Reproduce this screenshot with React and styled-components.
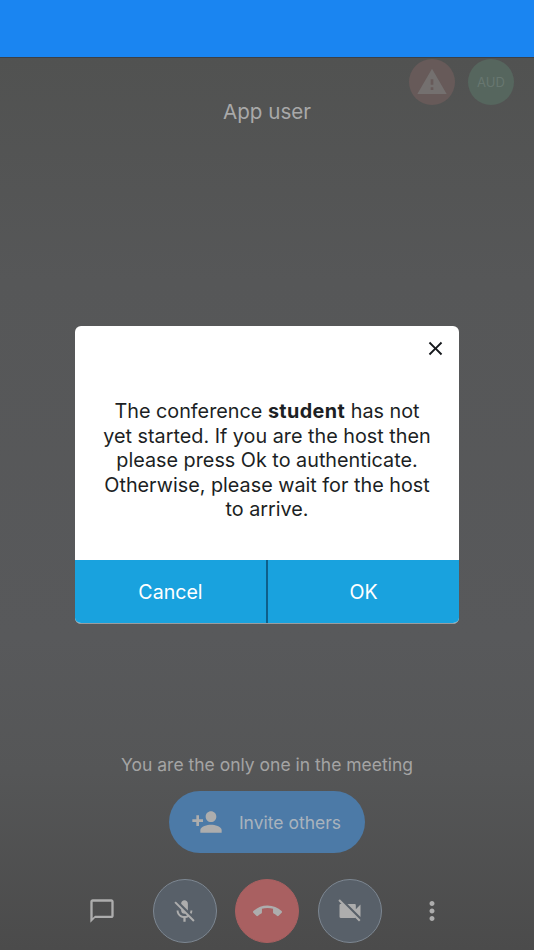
import styled, { createGlobalStyle } from "styled-components";

const GlobalStyle = createGlobalStyle`
  html, body {
    margin: 0;
    padding: 0;
    background: #545555;
    font-family: Inter, "Liberation Sans", sans-serif;
  }
  * {
    box-sizing: border-box;
  }
`;

const icons = {
  chat: "M20 2H4c-1.1 0-2 .9-2 2v18l4-4h14c1.1 0 2-.9 2-2V4c0-1.1-.9-2-2-2zm0 14H6l-2 2V4h16v12z",
  micOff:
    "M19 11h-1.7c0 .74-.16 1.43-.43 2.05l1.23 1.23c.56-.98.9-2.09.9-3.28zm-4.02.17c0-.06.02-.11.02-.17V5c0-1.66-1.34-3-3-3s-3 1.34-3 3v.18l5.98 5.99zM4.27 3L3 4.27l6.01 6.01V11c0 1.66 1.33 3 2.99 3 .22 0 .44-.03.65-.08l1.66 1.66c-.71.33-1.5.52-2.31.52-2.76 0-5.3-2.1-5.3-5.1H5c0 3.41 2.72 6.23 6 6.72V21h2v-3.28c.91-.13 1.77-.45 2.54-.9L19.73 21 21 19.73 4.27 3z",
  hangup:
    "M12 9c-1.6 0-3.15.25-4.6.72v3.1c0 .39-.23.74-.56.9-.98.49-1.87 1.12-2.66 1.85-.18.18-.43.28-.7.28-.28 0-.53-.11-.71-.29L.29 13.08c-.18-.17-.29-.42-.29-.7 0-.28.11-.53.29-.71C3.34 8.78 7.46 7 12 7s8.66 1.78 11.71 4.67c.18.18.29.43.29.71 0 .28-.11.53-.29.71l-2.48 2.48c-.18.18-.43.29-.71.29-.27 0-.52-.11-.7-.28-.79-.74-1.69-1.36-2.67-1.85-.33-.16-.56-.5-.56-.9v-3.1C15.15 9.25 13.6 9 12 9z",
  videoOff:
    "M21 6.5l-4 4V7c0-.55-.45-1-1-1H9.82L21 17.18V6.5zM3.27 2L2 3.27 4.73 6H4c-.55 0-1 .45-1 1v10c0 .55.45 1 1 1h12c.21 0 .39-.08.54-.18L19.73 21 21 19.73 3.27 2z",
  more: "M12 8c1.1 0 2-.9 2-2s-.9-2-2-2-2 .9-2 2 .9 2 2 2zm0 2c-1.1 0-2 .9-2 2s.9 2 2 2 2-.9 2-2-.9-2-2-2zm0 6c-1.1 0-2 .9-2 2s.9 2 2 2 2-.9 2-2-.9-2-2-2z",
  personAdd:
    "M15 12c2.21 0 4-1.79 4-4s-1.79-4-4-4-4 1.79-4 4 1.79 4 4 4zm-9-2V7H4v3H1v2h3v3h2v-3h3v-2H6zm9 4c-2.67 0-8 1.34-8 4v2h16v-2c0-2.66-5.33-4-8-4z",
  warning: "M1 21h22L12 2 1 21zm12-3h-2v-2h2v2zm0-4h-2v-4h2v4z",
  close:
    "M19 6.41L17.59 5 12 10.59 6.41 5 5 6.41 10.59 12 5 17.59 6.41 19 12 13.41 17.59 19 19 17.59 13.41 12z",
};

const Icon = ({ name, size, color = "#adadad" }) => (
  <svg width={size} height={size} viewBox="0 0 24 24" fill={color}>
    <path d={icons[name]} />
  </svg>
);

export default function App() {
  return (
    <Page>
      <GlobalStyle />
      <Header />
      <Stage>
        <Badges>
          <Badge $bg="#675a59">
            <Icon name="warning" size={32} color="#74706f" />
          </Badge>
          <Badge $bg="#56665e">AUD</Badge>
        </Badges>
        <UserName>App user</UserName>
        <Bottom>
          <OnlyOne>You are the only one in the meeting</OnlyOne>
          <InviteButton>
            <Icon name="personAdd" size={32} />
            <span>Invite others</span>
          </InviteButton>
          <Toolbar>
            <ToolSlot>
              <Icon name="chat" size={28} />
            </ToolSlot>
            <ToolSlot>
              <RoundButton $variant="muted">
                <Icon name="micOff" size={27} />
              </RoundButton>
            </ToolSlot>
            <ToolSlot>
              <RoundButton $variant="hangup">
                <Icon name="hangup" size={29} />
              </RoundButton>
            </ToolSlot>
            <ToolSlot>
              <RoundButton $variant="muted">
                <Icon name="videoOff" size={28} />
              </RoundButton>
            </ToolSlot>
            <ToolSlot>
              <Icon name="more" size={30} />
            </ToolSlot>
          </Toolbar>
        </Bottom>
      </Stage>
      <Overlay>
        <Dialog>
          <CloseRow>
            <Icon name="close" size={23} color="#15181c" />
          </CloseRow>
          <Message>
            The conference <strong>student</strong> has not yet started. If you
            are the host then please press Ok to authenticate. Otherwise, please
            wait for the host to arrive.
          </Message>
          <Actions>
            <ActionButton>Cancel</ActionButton>
            <Divider />
            <ActionButton>OK</ActionButton>
          </Actions>
        </Dialog>
      </Overlay>
    </Page>
  );
}

const Page = styled.div`
  position: relative;
  display: flex;
  flex-direction: column;
  width: 534px;
  height: 950px;
  overflow: hidden;
  background: #545555;
`;

const Header = styled.div`
  flex: none;
  height: 58px;
  background: #1a85f1;
  border-bottom: 1px solid #3a4048;
`;

const Stage = styled.div`
  position: relative;
  flex: 1;
  display: flex;
  flex-direction: column;
  align-items: center;
  background: linear-gradient(
    180deg,
    #515251 0%,
    #565758 25%,
    #58595b 65%,
    #555657 80%,
    #4b4b4b 100%
  );
`;

const Badges = styled.div`
  position: absolute;
  top: 1px;
  right: 20px;
  display: flex;
  gap: 13px;
`;

const Badge = styled.div`
  width: 46px;
  height: 46px;
  border-radius: 50%;
  display: flex;
  align-items: center;
  justify-content: center;
  background: ${(p) => p.$bg};
  color: #687770;
  font-size: 13px;
`;

const UserName = styled.div`
  margin-top: 40px;
  font-size: 20.6px;
  line-height: 28px;
  color: #a9a9a9;
`;

const Bottom = styled.div`
  margin-top: auto;
  width: 100%;
  padding-bottom: 7px;
  display: flex;
  flex-direction: column;
  align-items: center;
`;

const OnlyOne = styled.div`
  font-size: 17.5px;
  line-height: 24px;
  color: #a4a4a4;
`;

const InviteButton = styled.div`
  margin-top: 14px;
  width: 196px;
  height: 62px;
  padding-right: 2px;
  border-radius: 31px;
  background: #4c7aa7;
  display: flex;
  align-items: center;
  justify-content: center;
  gap: 16px;
  font-size: 17.5px;
  color: #a9b3bd;
`;

const Toolbar = styled.div`
  margin-top: 26px;
  display: flex;
  justify-content: center;
`;

const ToolSlot = styled.div`
  width: 82.5px;
  height: 64px;
  display: flex;
  align-items: center;
  justify-content: center;
`;

const RoundButton = styled.div`
  width: 64px;
  height: 64px;
  border-radius: 50%;
  display: flex;
  align-items: center;
  justify-content: center;
  background: ${(p) => (p.$variant === "hangup" ? "#a96061" : "#586069")};
  border: 1px solid ${(p) => (p.$variant === "hangup" ? "#a96061" : "#7d8792")};
`;

const Overlay = styled.div`
  position: absolute;
  inset: 0;
  display: flex;
  align-items: center;
  justify-content: center;
`;

const Dialog = styled.div`
  width: 384px;
  height: 298px;
  border-radius: 6px;
  overflow: hidden;
  background: #fff;
  display: flex;
  flex-direction: column;
  border-bottom: 1px solid #9a9c9e;
`;

const CloseRow = styled.div`
  height: 46px;
  padding: 11px 12px 0 0;
  display: flex;
  justify-content: flex-end;
`;

const Message = styled.div`
  flex: 1;
  padding: 27px 24px 0;
  text-align: center;
  font-size: 19.8px;
  line-height: 24.6px;
  color: #1c1f24;
  strong {
    font-weight: 700;
    letter-spacing: 0.4px;
  }
`;

const Actions = styled.div`
  height: 63px;
  display: flex;
`;

const ActionButton = styled.div`
  flex: 1;
  display: flex;
  align-items: center;
  justify-content: center;
  background: #19a2de;
  color: #fff;
  font-size: 19.6px;
`;

const Divider = styled.div`
  flex: none;
  width: 2px;
  background: #0e5f8a;
`;
